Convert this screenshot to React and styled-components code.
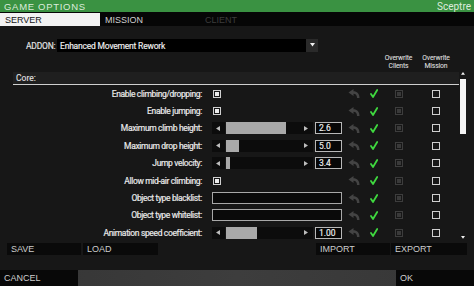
import React from "react";
import styled, { createGlobalStyle } from "styled-components";

const GlobalStyle = createGlobalStyle`
  html, body {
    margin: 0;
    padding: 0;
    background: #161616;
    overflow: hidden;
  }
  body {
    width: 474px;
    height: 286px;
  }
`;

const uiFont = `"Liberation Sans", Arial, sans-serif`;
const labelFont = `Roboto, "Liberation Sans", sans-serif`;

const Screen = styled.div`
  width: 474px;
  height: 286px;
  display: flex;
  flex-direction: column;
  background: #171717;
  font-family: ${labelFont};
  color: #e2e2e2;
`;

const TitleBar = styled.div`
  height: 12px;
  background: #3a9242;
  display: flex;
  align-items: center;
  justify-content: space-between;
  padding: 0 3px 0 4px;
  font-family: ${uiFont};
  font-size: 9.5px;
  color: #dcecdc;
  letter-spacing: 0.7px;
`;

const TitleRight = styled.span`
  font-family: ${labelFont};
  font-size: 10px;
  letter-spacing: 0;
`;

const TabBar = styled.div`
  height: 14px;
  background: #060606;
  display: flex;
  align-items: flex-end;
`;

const Tab = styled.div`
  width: 100px;
  height: 13px;
  display: flex;
  align-items: center;
  padding-left: 5px;
  box-sizing: border-box;
  font-family: ${uiFont};
  font-size: 9px;
  background: ${(p) => (p.$active ? "#f2f2f2" : "transparent")};
  color: ${(p) => (p.$active ? "#151515" : p.$disabled ? "#3c3c3c" : "#cfcfcf")};
`;

const Panel = styled.div`
  flex: 1;
  display: flex;
  flex-direction: column;
`;

const AddonRow = styled.div`
  margin-top: 13px;
  height: 13px;
  display: flex;
  align-items: center;
  padding-left: 26px;
`;

const AddonLabel = styled.span`
  width: 31px;
  font-size: 8.5px;
  letter-spacing: -0.2px;
  color: #e6e6e6;
  -webkit-text-stroke: 0.15px #e6e6e6;
`;

const Dropdown = styled.div`
  width: 249px;
  height: 13px;
  background: #000;
  display: flex;
  align-items: center;
  padding-left: 3px;
  box-sizing: border-box;
  font-size: 8.5px;
  letter-spacing: -0.2px;
  color: #f0f0f0;
  -webkit-text-stroke: 0.15px #f0f0f0;
`;

const DropButton = styled.div`
  width: 12px;
  height: 13px;
  background: #2a2a2a;
  display: flex;
  align-items: center;
  justify-content: center;
`;

const Grid = styled.div`
  display: grid;
  grid-template-columns: 199px 130px 24px 15px 35px 40px;
  align-items: center;
`;

const HeaderGrid = styled(Grid)`
  height: 20px;
  padding-left: 13px;
`;

const HeaderCell = styled.div`
  grid-column: ${(p) => p.$col};
  text-align: center;
  font-size: 6.8px;
  line-height: 8.5px;
  color: #dadada;
  letter-spacing: -0.15px;
  -webkit-text-stroke: 0.1px #dadada;
`;

const ListArea = styled.div`
  display: flex;
  padding-left: 13px;
`;

const ListContent = styled.div`
  width: 446px;
  display: flex;
  flex-direction: column;
`;

const CoreBar = styled.div`
  height: 12px;
  background: #1f1f1f;
  border-bottom: 1px solid #cfcfcf;
  display: flex;
  align-items: center;
  padding-left: 3px;
  font-size: 8.5px;
  color: #e4e4e4;
  -webkit-text-stroke: 0.1px #e4e4e4;
`;

const Row = styled(Grid)`
  height: 17.4px;
`;

const Label = styled.div`
  text-align: right;
  padding-right: 10px;
  font-size: 8.5px;
  letter-spacing: -0.35px;
  color: #e8e8e8;
  -webkit-text-stroke: 0.2px #e8e8e8;
  white-space: nowrap;
`;

const Cell = styled.div`
  display: flex;
  align-items: center;
  justify-content: ${(p) => p.$justify || "center"};
`;

const CheckBox = styled.div`
  width: 8px;
  height: 8px;
  box-sizing: border-box;
  border: 1px solid ${(p) => (p.$dim ? "#3d3d3d" : "#cfcfcf")};
  padding: 1px;
  margin-left: ${(p) => p.$offset || 0}px;
  display: flex;
`;

const CheckFill = styled.div`
  flex: 1;
  background: ${(p) => (p.$dim ? "#3a3a3a" : "#ececec")};
`;

const SliderWrap = styled.div`
  width: 130px;
  height: 12px;
  display: flex;
  align-items: center;
`;

const ArrowBox = styled.div`
  width: ${(p) => p.$w}px;
  height: 12px;
  background: #0c0c0c;
  display: flex;
  align-items: center;
  justify-content: center;
`;

const Track = styled.div`
  width: 73px;
  height: 12px;
  margin-left: 1px;
  background: #0c0c0c;
  display: flex;
`;

const TrackFill = styled.div`
  width: ${(p) => p.$fill}px;
  background: #a9a9a9;
`;

const ValueBox = styled.div`
  width: 27px;
  height: 12px;
  margin-left: 2px;
  box-sizing: border-box;
  border: 1px solid #b8b8b8;
  background: #070707;
  display: flex;
  align-items: center;
  padding-left: 3px;
  font-size: 8.5px;
  color: #f2f2f2;
  -webkit-text-stroke: 0.15px #f2f2f2;
`;

const TextBox = styled.div`
  width: 130px;
  height: 12px;
  box-sizing: border-box;
  border: 1px solid #a8a8a8;
  background: #0a0a0a;
`;

const ScrollBar = styled.div`
  width: 7px;
  height: 168px;
  display: flex;
  flex-direction: column;
  align-items: center;
`;

const ScrollThumb = styled.div`
  width: 6px;
  height: 55px;
  margin-top: 3px;
  background: #f4f4f4;
`;

const Spacer = styled.div`
  flex: 1;
`;

const ButtonRow = styled.div`
  margin-top: 1.5px;
  height: 12px;
  display: flex;
  padding: 0 7px;
`;

const Button = styled.div`
  width: ${(p) => p.$w}px;
  margin-left: ${(p) => p.$gap || 0}px;
  height: 100%;
  background: #0a0a0a;
  display: flex;
  align-items: center;
  padding-left: 4px;
  box-sizing: border-box;
  font-family: ${uiFont};
  font-size: 9px;
  color: #cdcdcd;
`;

const Footer = styled.div`
  height: 16px;
  display: flex;
  background: linear-gradient(90deg, #353535, #3d3d3d 50%, #363636);
`;

const FooterButton = styled.div`
  width: ${(p) => p.$w}px;
  background: #080808;
  display: flex;
  align-items: center;
  padding-left: 4px;
  box-sizing: border-box;
  font-family: ${uiFont};
  font-size: 9px;
  color: #cfcfcf;
`;

const Tri = ({ dir, color = "#bdbdbd", size = 5 }) => {
  const pts = {
    left: "4,0 4,5 0,2.5",
    right: "0,0 0,5 4,2.5",
    down: "0,0 5,0 2.5,3.5",
    up: "0,3.5 5,3.5 2.5,0",
  }[dir];
  return (
    <svg width={size} height={size} viewBox="0 0 5 5">
      <polygon points={pts} fill={color} />
    </svg>
  );
};

const ResetIcon = () => (
  <svg width="12" height="9" viewBox="0 0 12 9">
    <path
      d="M11.5 9 C11.5 4.5, 9 2.2, 5.5 2.2 L5.5 0 L0.5 3.5 L5.5 7 L5.5 4.8 C8 4.8, 9 6.5, 9 9 Z"
      fill="#444"
    />
  </svg>
);

const GreenCheck = () => (
  <svg width="8" height="9" viewBox="0 0 8 9">
    <polyline
      points="1,5 3,8 7.2,1"
      fill="none"
      stroke="#3fd83f"
      strokeWidth="1.8"
      strokeLinecap="round"
      strokeLinejoin="round"
    />
  </svg>
);

const settings = [
  { label: "Enable climbing/dropping:", type: "check" },
  { label: "Enable jumping:", type: "check" },
  { label: "Maximum climb height:", type: "slider", fill: 60, value: "2.6" },
  { label: "Maximum drop height:", type: "slider", fill: 13, value: "5.0" },
  { label: "Jump velocity:", type: "slider", fill: 4, value: "3.4" },
  { label: "Allow mid-air climbing:", type: "check" },
  { label: "Object type blacklist:", type: "text" },
  { label: "Object type whitelist:", type: "text" },
  {
    label: "Animation speed coefficient:",
    type: "slider",
    fill: 31,
    value: "1.00",
  },
];

const Control = ({ item }) => {
  if (item.type === "check")
    return (
      <CheckBox $offset={1}>
        <CheckFill />
      </CheckBox>
    );
  if (item.type === "text") return <TextBox />;
  return (
    <SliderWrap>
      <ArrowBox $w={13}>
        <Tri dir="left" />
      </ArrowBox>
      <Track>
        <TrackFill $fill={item.fill} />
      </Track>
      <ArrowBox $w={14}>
        <Tri dir="right" />
      </ArrowBox>
      <ValueBox>{item.value}</ValueBox>
    </SliderWrap>
  );
};

export default function App() {
  return (
    <>
      <GlobalStyle />
      <Screen>
        <TitleBar>
          <span>GAME OPTIONS</span>
          <TitleRight>Sceptre</TitleRight>
        </TitleBar>
        <TabBar>
          <Tab $active>SERVER</Tab>
          <Tab>MISSION</Tab>
          <Tab $disabled>CLIENT</Tab>
        </TabBar>
        <Panel>
          <AddonRow>
            <AddonLabel>ADDON:</AddonLabel>
            <Dropdown>Enhanced Movement Rework</Dropdown>
            <DropButton>
              <Tri dir="down" color="#f0f0f0" size={5} />
            </DropButton>
          </AddonRow>
          <HeaderGrid>
            <HeaderCell $col={5}>
              Overwrite
              <br />
              Clients
            </HeaderCell>
            <HeaderCell $col={6}>
              Overwrite
              <br />
              Mission
            </HeaderCell>
          </HeaderGrid>
          <ListArea>
            <ListContent>
              <CoreBar>Core:</CoreBar>
              {settings.map((item) => (
                <Row key={item.label}>
                  <Label>{item.label}</Label>
                  <Cell $justify="flex-start">
                    <Control item={item} />
                  </Cell>
                  <Cell>
                    <ResetIcon />
                  </Cell>
                  <Cell>
                    <GreenCheck />
                  </Cell>
                  <Cell>
                    <CheckBox $dim>
                      <CheckFill $dim />
                    </CheckBox>
                  </Cell>
                  <Cell>
                    <CheckBox />
                  </Cell>
                </Row>
              ))}
            </ListContent>
            <ScrollBar>
              <Tri dir="up" color="#f0f0f0" size={4} />
              <ScrollThumb />
              <Spacer />
              <Tri dir="down" color="#f0f0f0" size={4} />
            </ScrollBar>
          </ListArea>
          <ButtonRow>
            <Button $w={74}>SAVE</Button>
            <Button $w={75} $gap={2}>
              LOAD
            </Button>
            <Spacer />
            <Button $w={74}>IMPORT</Button>
            <Button $w={76} $gap={1}>
              EXPORT
            </Button>
          </ButtonRow>
        </Panel>
        <Footer>
          <FooterButton $w={78}>CANCEL</FooterButton>
          <Spacer />
          <FooterButton $w={78}>OK</FooterButton>
        </Footer>
      </Screen>
    </>
  );
}
